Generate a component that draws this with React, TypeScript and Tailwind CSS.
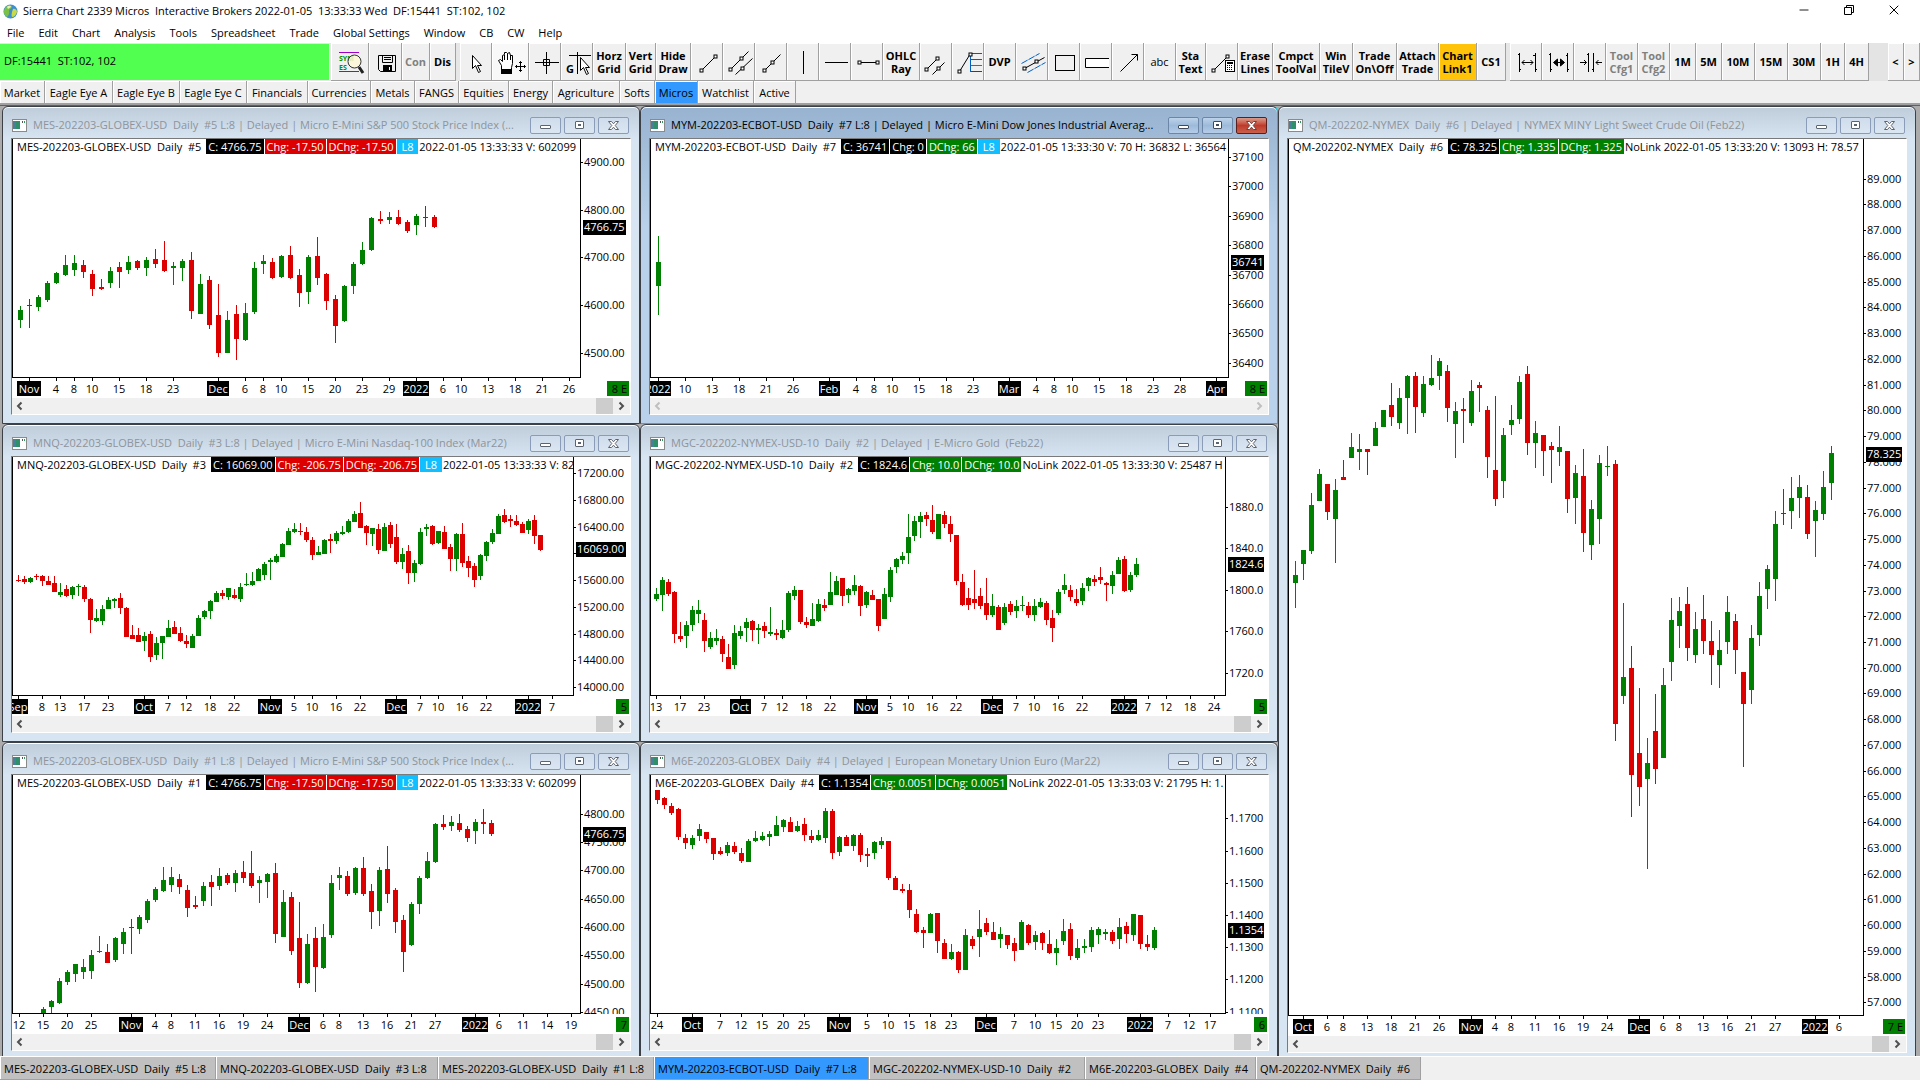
import React from "react";
import { Minus, X } from "lucide-react";
import clsx from "clsx";

const GREEN = "#008000";
const RED = "#dc0000";
const CYAN = "#0fbfff";
const BLACK = "#000000";

// price levels are stored in thirds of a pixel, measured from the chart's own origin
const UNITS = 3;

interface Tag {
  text: string;
  color: string;
}

interface ChartData {
  id: string;
  title: string;
  tab: string;
  label: string;
  tags: Tag[];
  info: string;
  active?: boolean;
  badge: string;
  axisWidth: number;
  firstX: number;
  step: number;
  origin: number;
  last: [string, number];
  prices: [string, number][];
  times: [string, number][];
  // direction (g / r) followed by high, body top, body bottom, low
  bars: string;
}

const mesTags: Tag[] = [
  { text: "C: 4766.75", color: BLACK },
  { text: "Chg: -17.50", color: RED },
  { text: "DChg: -17.50", color: RED },
  { text: " L8 ", color: CYAN },
];

const mes5: ChartData = {
  id: "mes5",
  title: "MES-202203-GLOBEX-USD  Daily  #5 L:8 | Delayed | Micro E-Mini S&P 500 Stock Price Index (...",
  tab: "MES-202203-GLOBEX-USD  Daily  #5 L:8",
  label: "MES-202203-GLOBEX-USD  Daily  #5",
  tags: mesTags,
  info: "2022-01-05 13:33:33 V: 602099",
  badge: "8 E",
  axisWidth: 49,
  firstX: 7,
  step: 9,
  origin: 27,
  last: ["4766.75", 290],
  prices: [["4900.00", 97], ["4800.00", 241], ["4700.00", 382], ["4600.00", 526], ["4500.00", 670]],
  times: [
    ["Nov", 1], ["4", 4], ["8", 6], ["10", 8], ["15", 11], ["18", 14], ["23", 17], ["Dec", 22], ["6", 25], ["8", 27],
    ["10", 29], ["15", 32], ["20", 35], ["23", 38], ["29", 41], ["2022", 44], ["6", 47], ["10", 49], ["13", 52],
    ["18", 55], ["21", 58], ["26", 61],
  ],
  bars: `g528,540,570,594 r507,525,528,594 g495,501,531,543 g453,459,510,516 g426,429,459,462 g375,405,435,438
    g375,399,420,438 r390,405,426,444 r420,432,477,498 r447,471,477,480 g411,423,459,474 r396,411,426,474
    g378,396,420,432 r390,393,414,420 g381,390,414,438 r357,387,402,414 r333,390,423,426 g396,408,414,465
    g387,393,414,453 r366,390,543,567 g432,462,552,552 r438,450,585,597 r462,555,669,681 g543,570,669,669
    r525,552,627,690 g519,549,630,633 g396,414,546,552 g375,393,402,432 r384,396,444,447 g375,378,441,444
    r348,375,444,447 r417,435,489,531 g375,381,486,522 r321,378,444,465 r429,432,513,540 r495,507,588,639
    g465,468,573,576 g396,402,468,492 g336,360,402,405 g261,264,360,363 r243,267,273,282 g246,261,270,282
    r240,261,282,285 r270,276,303,309 g252,258,285,315 r228,261,264,291 r255,261,291,294`,
};

const mnq: ChartData = {
  id: "mnq",
  title: "MNQ-202203-GLOBEX-USD  Daily  #3 L:8 | Delayed | Micro E-Mini Nasdaq-100 Index (Mar22)",
  tab: "MNQ-202203-GLOBEX-USD  Daily  #3 L:8",
  label: "MNQ-202203-GLOBEX-USD  Daily  #3",
  tags: [
    { text: "C: 16069.00", color: BLACK },
    { text: "Chg: -206.75", color: RED },
    { text: "DChg: -206.75", color: RED },
    { text: " L8 ", color: CYAN },
  ],
  info: "2022-01-05 13:33:33 V: 82",
  badge: "5",
  axisWidth: 56,
  firstX: 5,
  step: 6,
  origin: 81,
  last: ["16069.00", 358],
  prices: [
    ["17200.00", 130], ["16800.00", 211], ["16400.00", 290], ["16000.00", 370], ["15600.00", 451], ["15200.00", 532],
    ["14800.00", 613], ["14400.00", 691], ["14000.00", 772],
  ],
  times: [
    ["Sep", 0], ["8", 4], ["13", 7], ["17", 11], ["23", 15], ["Oct", 21], ["7", 25], ["12", 28], ["18", 32], ["22", 36],
    ["Nov", 42], ["5", 46], ["10", 49], ["16", 53], ["22", 57], ["Dec", 63], ["7", 67], ["10", 70], ["16", 74],
    ["22", 78], ["2022", 85], ["7", 89],
  ],
  bars: `r435,450,453,456 r438,447,456,462 g441,444,456,459 r432,438,441,450 r435,438,453,468 r438,453,465,465
    r438,459,486,486 g459,486,495,501 r465,477,498,501 g468,471,495,507 g462,468,471,498 r465,471,507,516
    r504,507,570,609 g537,564,573,576 g525,537,573,585 g501,510,537,537 g504,507,513,534 r489,504,534,552
    r531,534,621,621 r585,615,627,627 r594,615,636,636 g606,618,633,663 r603,612,681,696 g621,639,675,690
    g618,618,639,687 g570,594,621,621 r573,591,612,612 r591,609,633,636 r615,633,642,654 g612,618,654,654
    g555,564,618,618 g540,543,561,567 g510,513,543,567 g483,489,516,516 r480,489,498,507 g474,474,501,510
    r477,495,504,507 g459,471,507,516 g429,462,465,468 g426,453,465,468 g414,417,453,453 g396,402,435,450
    g384,390,396,450 g372,378,396,399 g339,342,381,381 g294,303,345,345 g279,297,306,309 r279,303,306,315
    r291,306,330,336 r321,330,375,390 g348,366,375,375 g327,330,372,372 r312,327,333,369 g303,309,333,342
    g288,306,312,315 g267,273,306,309 g243,252,276,276 r216,249,294,294 r285,288,309,345 g294,294,312,348
    r282,297,360,372 g279,291,363,363 r276,285,342,354 r282,321,396,402 g354,372,396,417 r345,363,429,462
    g390,399,429,456 g294,306,402,405 g282,291,297,318 r285,288,342,345 g303,303,339,342 r288,306,357,357
    r342,351,387,423 g309,312,387,423 r279,312,399,411 r378,393,414,441 r399,408,450,471 g372,375,438,450
    g333,336,378,393 g297,309,336,342 g252,258,312,312 r237,255,276,279 r255,267,273,291 r255,273,285,288
    r276,282,309,309 g267,273,300,312 r255,270,318,342 r315,315,360,363`,
};

const mes1: ChartData = {
  id: "mes1",
  title: "MES-202203-GLOBEX-USD  Daily  #1 L:8 | Delayed | Micro E-Mini S&P 500 Stock Price Index (...",
  tab: "MES-202203-GLOBEX-USD  Daily  #1 L:8",
  label: "MES-202203-GLOBEX-USD  Daily  #1",
  tags: mesTags,
  info: "2022-01-05 13:33:33 V: 602099",
  badge: "7",
  axisWidth: 49,
  firstX: 30,
  step: 8,
  origin: 105,
  last: ["4766.75", 281],
  prices: [
    ["4800.00", 223], ["4750.00", 307], ["4700.00", 391], ["4650.00", 478], ["4600.00", 562], ["4550.00", 646],
    ["4500.00", 733], ["4450.00", 817],
  ],
  times: [
    ["12", -3], ["15", 0], ["20", 3], ["25", 6], ["Nov", 11], ["4", 14], ["8", 16], ["11", 19], ["16", 22], ["19", 25],
    ["24", 28], ["Dec", 32], ["6", 35], ["8", 37], ["13", 40], ["16", 43], ["21", 46], ["27", 49], ["2022", 54],
    ["6", 57], ["11", 60], ["14", 63], ["19", 66],
  ],
  bars: `g801,807,819,819 g780,783,801,819 g714,723,789,792 g690,696,726,735 g672,672,702,726 g657,681,696,717
    g630,645,693,717 g588,633,636,639 r612,636,669,669 g591,594,660,666 g564,576,612,642 r537,561,564,642
    g525,531,567,582 g477,483,540,549 g441,447,480,486 g381,420,453,456 g381,411,435,456 r402,417,441,462
    r435,450,504,531 r468,495,501,507 g426,438,483,498 r405,426,441,498 g384,408,438,450 r399,405,429,435
    g390,399,429,456 r363,396,414,429 r333,399,438,444 g408,420,429,489 g399,402,426,474 r369,399,582,609
    g450,486,591,591 r456,471,633,645 r486,594,729,744 g582,612,729,732 r561,594,681,756 g552,591,684,687
    g405,429,585,594 g381,405,414,450 r393,408,462,468 g381,384,459,465 r351,384,462,468 r432,453,516,567
    g381,390,513,558 r318,387,462,489 r444,450,546,579 r525,540,636,696 g486,492,615,618 g408,414,492,522
    g336,363,414,417 g249,252,366,369 r225,252,261,270 g228,246,258,273 r222,249,270,276 r258,267,294,306
    g237,246,273,312 r207,246,252,282 r240,249,282,288`,
};

const mym: ChartData = {
  id: "mym",
  title: "MYM-202203-ECBOT-USD  Daily  #7 L:8 | Delayed | Micro E-Mini Dow Jones Industrial Averag...",
  tab: "MYM-202203-ECBOT-USD  Daily  #7 L:8",
  label: "MYM-202203-ECBOT-USD  Daily  #7",
  tags: [
    { text: "C: 36741", color: BLACK },
    { text: "Chg: 0", color: BLACK },
    { text: "DChg: 66", color: GREEN },
    { text: " L8 ", color: CYAN },
  ],
  info: "2022-01-05 13:33:30 V: 70 H: 36832 L: 36564",
  active: true,
  badge: "8 E",
  axisWidth: 39,
  firstX: 7,
  step: 9,
  origin: 88,
  last: ["36741", 458],
  prices: [
    ["37100", 143], ["37000", 230], ["36900", 320], ["36800", 407], ["36700", 497], ["36600", 584], ["36500", 671],
    ["36400", 761],
  ],
  times: [
    ["2022", 0], ["10", 3], ["13", 6], ["18", 9], ["21", 12], ["26", 15], ["Feb", 19], ["4", 22], ["8", 24], ["10", 26],
    ["15", 29], ["18", 32], ["23", 35], ["Mar", 39], ["4", 42], ["8", 44], ["10", 46], ["15", 49], ["18", 52],
    ["23", 55], ["28", 58], ["Apr", 62],
  ],
  bars: "g378,456,528,615",
};

const mgc: ChartData = {
  id: "mgc",
  title: "MGC-202202-NYMEX-USD-10  Daily  #2 | Delayed | E-Micro Gold  (Feb22)",
  tab: "MGC-202202-NYMEX-USD-10  Daily  #2",
  label: "MGC-202202-NYMEX-USD-10  Daily  #2",
  tags: [
    { text: "C: 1824.6", color: BLACK },
    { text: "Chg: 10.0", color: GREEN },
    { text: "DChg: 10.0", color: GREEN },
  ],
  info: "NoLink 2022-01-05 13:33:30 V: 25487 H",
  badge: "5",
  axisWidth: 42,
  firstX: 5,
  step: 6,
  origin: 96,
  last: ["1824.6", 418],
  prices: [["1880.0", 247], ["1840.0", 370], ["1800.0", 496], ["1760.0", 619], ["1720.0", 745]],
  times: [
    ["13", 0], ["17", 4], ["23", 8], ["Oct", 14], ["7", 18], ["12", 21], ["18", 25], ["22", 29], ["Nov", 35], ["5", 39],
    ["10", 42], ["16", 46], ["22", 50], ["Dec", 56], ["7", 60], ["10", 63], ["16", 67], ["22", 71], ["2022", 78],
    ["7", 82], ["12", 85], ["18", 89], ["24", 93],
  ],
  bars: `g489,507,522,528 g456,465,510,558 r462,471,507,513 r498,501,627,654 r591,633,642,651 g588,600,633,669
    g543,555,600,618 g525,555,567,594 r564,585,648,681 g621,639,666,672 g612,639,648,660 r633,642,687,711
    r657,696,732,732 g600,624,720,732 g603,618,633,642 g579,591,609,651 r585,588,615,648 g597,609,615,657
    r591,603,618,639 g546,621,627,633 r612,624,630,645 g585,615,639,642 g498,504,615,621 g483,495,513,525
    r495,495,591,597 r576,591,600,609 g534,582,603,603 g522,537,588,591 r522,540,549,558 g441,501,540,540
    g453,468,510,510 r459,459,513,543 g489,492,510,534 g450,480,498,510 r480,483,543,573 g498,501,540,549
    r495,510,525,525 r522,522,603,618 g489,507,582,582 g426,435,516,531 g399,402,426,444 g381,393,405,417
    g267,336,384,417 g273,288,333,348 g261,273,291,339 r261,270,282,303 r240,285,321,327 g267,267,342,342
    r258,270,297,309 r273,297,327,351 r330,330,468,480 r447,471,540,543 r489,519,540,555 r435,522,534,552
    r489,513,543,552 r459,534,570,585 g507,543,570,576 r540,546,615,615 g534,546,594,600 r528,537,561,570
    g525,543,558,579 g513,540,543,558 r531,543,570,579 g522,543,570,588 g519,531,546,549 r528,534,585,600
    r555,579,609,651 g492,501,564,570 g447,480,495,507 r480,495,516,528 r492,522,534,543 g474,489,528,540
    g456,459,483,498 r450,462,471,483 r426,456,465,477 r471,474,480,528 g438,450,483,507 g396,405,447,447
    r393,402,498,501 g441,450,495,501 g399,417,450,456`,
};

const m6e: ChartData = {
  id: "m6e",
  title: "M6E-202203-GLOBEX  Daily  #4 | Delayed | European Monetary Union Euro (Mar22)",
  tab: "M6E-202203-GLOBEX  Daily  #4",
  label: "M6E-202203-GLOBEX  Daily  #4",
  tags: [
    { text: "C: 1.1354", color: BLACK },
    { text: "Chg: 0.0051", color: GREEN },
    { text: "DChg: 0.0051", color: GREEN },
  ],
  info: "NoLink 2022-01-05 13:33:03 V: 21795 H: 1.",
  badge: "6",
  axisWidth: 42,
  firstX: 6,
  step: 7,
  origin: 105,
  last: ["1.1354", 571],
  prices: [
    ["1.1700", 235], ["1.1600", 334], ["1.1500", 430], ["1.1400", 526], ["1.1300", 622], ["1.1200", 718],
    ["1.1100", 817],
  ],
  times: [
    ["24", 0], ["Oct", 5], ["7", 9], ["12", 12], ["15", 15], ["20", 18], ["25", 21], ["Nov", 26], ["5", 30], ["10", 33],
    ["15", 36], ["18", 39], ["23", 42], ["Dec", 47], ["7", 51], ["10", 54], ["15", 57], ["20", 60], ["23", 63],
    ["2022", 69], ["7", 73], ["12", 76], ["17", 79],
  ],
  bars: `r150,150,180,192 r171,174,195,207 r189,198,219,225 r204,207,291,300 r282,294,309,327 g285,294,315,327
    g252,267,288,303 r276,276,297,309 r294,294,342,360 r321,333,342,345 g306,315,339,348 r306,318,336,342
    r324,339,363,369 g297,303,366,366 g273,294,303,306 g276,288,300,303 g273,282,291,318 g228,255,288,288
    g237,240,261,276 r231,246,276,276 g243,258,273,276 r234,252,285,303 r270,288,300,309 g270,285,300,303
    g204,213,294,309 r207,213,339,357 g288,291,336,348 r285,291,318,318 g282,285,318,333 r279,285,345,366
    r324,342,348,381 g303,306,339,357 g291,303,315,327 r303,303,414,420 r408,414,450,450 r432,447,453,459
    r432,450,510,534 r507,522,576,579 r561,570,579,624 g519,522,579,579 r519,519,603,639 r597,609,657,657
    g612,636,657,660 r633,636,690,699 g567,585,690,690 r588,597,618,627 g510,567,591,651 r534,549,576,585
    r546,576,600,600 g561,582,597,624 r585,585,615,627 r594,609,633,663 g540,546,630,630 r552,555,609,615
    g573,585,606,630 r576,579,609,630 r570,612,639,642 g597,624,639,675 g537,573,603,615 r549,567,648,660
    g597,624,654,660 g597,618,624,639 g561,570,621,636 g561,567,585,612 g567,576,582,600 r570,576,603,612
    g534,561,597,627 r546,558,582,609 g522,522,585,603 r525,525,612,627 r585,612,621,633 g561,570,624,630`,
};

const qm: ChartData = {
  id: "qm",
  title: "QM-202202-NYMEX  Daily  #6 | Delayed | NYMEX MINY Light Sweet Crude Oil (Feb22)",
  tab: "QM-202202-NYMEX  Daily  #6",
  label: "QM-202202-NYMEX  Daily  #6",
  tags: [
    { text: "C: 78.325", color: BLACK },
    { text: "Chg: 1.335", color: GREEN },
    { text: "DChg: 1.325", color: GREEN },
  ],
  info: "NoLink 2022-01-05 13:33:20 V: 13093 H: 78.57",
  badge: "7 E",
  axisWidth: 42,
  firstX: 6,
  step: 8,
  origin: -483,
  last: ["78.325", 461],
  prices: Array.from({ length: 33 }, (_, i): [string, number] => [`${89 - i}.000`, -364 + i * 77.22]),
  times: [
    ["Oct", 1], ["6", 4], ["8", 6], ["13", 9], ["18", 12], ["21", 15], ["26", 18], ["Nov", 22], ["4", 25], ["8", 27],
    ["11", 30], ["16", 33], ["19", 36], ["24", 39], ["Dec", 43], ["6", 46], ["8", 48], ["13", 51], ["16", 54],
    ["21", 57], ["27", 60], ["2022", 65], ["6", 68],
  ],
  bars: `g783,825,849,924 g750,750,792,840 g579,615,753,762 g507,522,603,603 r552,552,636,660 g537,570,657,789
    r480,531,540,540 g399,441,474,474 g402,447,456,510 r447,447,456,525 g366,384,438,438 g330,330,381,381
    r249,315,351,378 g264,294,369,387 g225,228,294,402 r216,228,321,399 g228,252,339,351 g165,234,255,258
    g174,183,228,270 r195,213,324,366 g306,333,372,474 r294,327,333,429 g240,273,369,378 r246,255,264,336
    r318,330,471,534 r288,510,597,618 g384,405,543,594 g315,360,375,405 g228,246,357,372 r198,222,429,465
    g363,399,429,504 r405,405,453,528 r426,438,450,549 g378,441,456,498 r453,453,597,639 g495,519,594,672
    r447,528,699,756 g600,627,735,780 g465,489,657,732 g438,498,501,528 r480,492,1272,1323 g909,1131,1188,1212
    r1038,1104,1425,1551 r1164,1359,1461,1518 g1314,1389,1437,1707 r1182,1293,1407,1452 g1104,1155,1374,1374
    g894,960,1086,1143 g891,933,978,1044 r861,912,1044,1083 g936,987,1065,1089 r885,957,1023,1062
    r963,1023,1065,1155 g990,1050,1095,1164 g888,936,1026,1062 r942,963,1050,1122 r1116,1116,1212,1401
    g975,1014,1170,1212 g846,888,1005,1038 g795,807,867,927 g633,672,837,903 r567,639,642,675 g531,594,633,687
    g525,561,594,654 r555,591,702,717 g603,630,663,771 g513,561,642,660 g438,459,549,600`,
};

const columns = [
  { className: "h-[calc(100%+4px)]", charts: [mes5, mnq, mes1] },
  { className: "h-[calc(100%+4px)]", charts: [mym, mgc, m6e] },
  { className: "h-[calc(100%+6px)]", charts: [qm] },
];

const monthWidth: Record<string, number> = {
  Nov: 24, Dec: 22, Oct: 21, Sep: 20, Feb: 21, Mar: 23, Apr: 21, "2022": 26,
};

const Candles = ({ chart }: { chart: ChartData }) => (
  <svg className="block h-full w-full" shapeRendering="crispEdges" aria-hidden="true">
    {chart.bars.trim().split(/\s+/).map((bar, i) => {
      const [high, top, bottom, low] = bar
        .slice(1)
        .split(",")
        .map((v) => Math.round((Number(v) - chart.origin) / UNITS));
      const x = chart.firstX + i * chart.step;
      return (
        <g key={i} fill={bar[0] === "g" ? GREEN : RED}>
          <rect x={x} y={high} width={1} height={Math.max(low - high, 1)} />
          <rect x={x - 2} y={top} width={5} height={Math.max(bottom - top, 1)} />
        </g>
      );
    })}
  </svg>
);

const PriceAxis = ({ chart }: { chart: ChartData }) => {
  const y = (v: number) => Math.round((v - chart.origin) / UNITS);
  const [lastText, lastValue] = chart.last;
  return (
    <div className="shrink-0 border-l border-black" style={{ width: chart.axisWidth + 1 }}>
      <svg className="block h-full w-full text-[11px]">
        {chart.prices.map(([text, value]) => (
          <g key={text}>
            <rect x={0} y={y(value)} width={2} height={1} />
            <text x={3} y={y(value) + 4}>{text}</text>
          </g>
        ))}
        <rect x={2} y={y(lastValue) - 7} width={chart.axisWidth - 6} height={15} />
        <text x={3} y={y(lastValue) + 4} fill="#fff">{lastText}</text>
      </svg>
    </div>
  );
};

const TimeAxis = ({ chart }: { chart: ChartData }) => (
  <div className="flex h-5 shrink-0">
    <svg className="block h-full min-w-0 flex-1 text-[11px]">
      {chart.times.map(([text, index]) => {
        const x = chart.firstX + 1 + index * chart.step;
        const boxed = monthWidth[text];
        return (
          <g key={index}>
            <rect x={x} y={0} width={1} height={3} />
            {boxed && <rect x={x - Math.floor(boxed / 2)} y={3} width={boxed} height={15} />}
            <text x={x} y={15} textAnchor="middle" fill={boxed ? "#fff" : "#000"}>{text}</text>
          </g>
        );
      })}
    </svg>
    <span className="mr-px mt-[3px] h-[15px] whitespace-pre bg-[#008000] px-[2px] text-[11px] leading-[15px]">
      {" " + chart.badge}
    </span>
  </div>
);

const Chevron = ({ flip, muted }: { flip?: boolean; muted?: boolean }) => (
  <svg width="17" height="16" viewBox="0 0 17 16" fill="none" stroke={muted ? "#bfbfbf" : "#505050"} strokeWidth="2">
    <path d={flip ? "M6.5 4.5L10 8L6.5 11.5" : "M9.5 4.5L6 8L9.5 11.5"} />
  </svg>
);

const ScrollBar = ({ muted }: { muted?: boolean }) => (
  <div className="flex h-4 shrink-0 bg-[#f0f0f0]">
    <button aria-label="Scroll left"><Chevron muted={muted} /></button>
    <div className="flex-1" />
    {!muted && <div className="w-[17px] bg-[#cdcdcd]" />}
    <button aria-label="Scroll right"><Chevron flip muted={muted} /></button>
  </div>
);

const FrameButton = ({ kind, active }: { kind: "min" | "max" | "close"; active?: boolean }) => {
  const red = active && kind === "close";
  const stroke = active ? "#3f4a5a" : "#5c6470";
  return (
    <button
      aria-label={kind}
      className={clsx(
        "flex h-[17px] w-[31px] items-center justify-center rounded-[2px] border",
        red && "border-[#5a1f1c] bg-linear-to-b from-[#d99a8c] via-[#c0392b] to-[#c9604c]",
        !red && active && "border-[#6c86a8] bg-linear-to-b from-[#bdd3ea] via-[#9cbada] to-[#b5cde8]",
        !active && "border-[#8b9cb8] bg-linear-to-b from-[#cfdceb] to-[#dbe6f3]",
      )}
    >
      <svg width="13" height="11" viewBox="0 0 13 11" fill="#fff" stroke={stroke}>
        {kind === "min" && <rect x="1.5" y="5.5" width="10" height="3" rx="0.5" />}
        {kind === "max" && (
          <>
            <rect x="2.5" y="1.5" width="8" height="7" rx="0.5" />
            <rect x="5.5" y="4.5" width="2" height="1" />
          </>
        )}
        {kind === "close" && (
          <path
            d="M1.5 1.5H4.5L6.5 3.8L8.5 1.5H11.5L8.2 5.5L11.5 9.5H8.5L6.5 7.2L4.5 9.5H1.5L4.8 5.5Z"
            stroke={red ? "#7d3b36" : stroke}
          />
        )}
      </svg>
    </button>
  );
};

const ChartIcon = () => (
  <svg width="15" height="13" viewBox="0 0 15 13" shapeRendering="crispEdges" className="shrink-0">
    <rect x="0" y="0" width="15" height="13" fill="#8a8a8a" />
    <rect x="1" y="1" width="13" height="11" fill="#fff" />
    <rect x="1" y="2" width="7" height="8" fill="#2f8f6a" />
    <rect x="1" y="2" width="3" height="8" fill="#4a7f9a" />
    <rect x="10" y="2" width="1" height="2" fill="#555" />
    <rect x="12" y="2" width="1" height="2" fill="#2a9d5b" />
  </svg>
);

const ChartWindow = ({ chart }: { chart: ChartData }) => (
  <section
    className={clsx(
      "flex min-h-0 flex-1 flex-col rounded-t-[6px] border border-[#3c4148] px-2 pb-2 shadow-[inset_0_1px_0_#fff]",
      chart.active
        ? "border-b-[#00c4dc] border-r-[#00c4dc] bg-linear-to-b from-[#98b3d0] to-[#b9d1ea] to-[120px]"
        : "bg-linear-to-b from-[#bfcddb] to-[#d7e4f2] to-[32px]",
    )}
  >
    <header className="flex h-[31px] shrink-0 items-center gap-1 pb-0.5 pl-px pr-0.5 pt-[7px]">
      <ChartIcon />
      <h2
        className={clsx(
          "min-w-0 flex-1 overflow-hidden whitespace-pre pl-[2px] text-[11px] leading-4",
          chart.active ? "text-black" : "text-[#8e949b]",
        )}
      >
        {chart.title}
      </h2>
      <div className="flex gap-[3px]">
        <FrameButton kind="min" active={chart.active} />
        <FrameButton kind="max" active={chart.active} />
        <FrameButton kind="close" active={chart.active} />
      </div>
    </header>
    <div className="flex min-h-0 flex-1 flex-col border border-b-white border-l-[#7a7a7a] border-r-white border-t-[#7a7a7a] bg-white">
      <div className="flex min-h-0 flex-1">
        <div className="relative min-w-0 flex-1 overflow-hidden border-b border-l border-black">
          <Candles chart={chart} />
          <div className="absolute inset-x-0 top-0 flex h-[15px] gap-px overflow-hidden whitespace-pre pl-1 text-[11px] leading-[15px]">
            <span className="pr-1">{chart.label}</span>
            {chart.tags.map((tag) => (
              <span key={tag.text} className="px-[2px] text-white" style={{ backgroundColor: tag.color }}>
                {tag.text}
              </span>
            ))}
            <span>{chart.info}</span>
          </div>
        </div>
        <PriceAxis chart={chart} />
      </div>
      <TimeAxis chart={chart} />
      <ScrollBar muted={chart.active} />
    </div>
  </section>
);

/* ---------- toolbar ---------- */

const Knot = ({ x, y }: { x: number; y: number }) => (
  <rect x={x - 1.5} y={y - 1.5} width={3} height={3} fill="#fff" />
);

const icons: Record<string, React.ReactNode> = {
  find: (
    <>
      <path d="M8 9.5H28M8 28.5H28" stroke="#a000c8" />
      <text x="8" y="18" fontSize="7" fontWeight="bold" fill="#009000" stroke="none">SYM</text>
      <text x="8" y="27" fontSize="7" fontWeight="bold" fill="#009000" stroke="none">ES</text>
      <circle cx="23.5" cy="18.5" r="6.5" fill="#fff8d8" fillOpacity="0.85" stroke="#333" />
      <path d="M28 24L32 30" strokeWidth="3" stroke="#222" />
    </>
  ),
  save: (
    <>
      <path d="M9.5 12.5H26.5V28.5H11.5L9.5 26.5Z" />
      <path d="M13.5 12.5V19.5H23.5V12.5M15 14.5H22M15 16.5H22" />
      <rect x="14.5" y="22.5" width="8" height="6" fill="#000" />
      <path d="M20.5 24V27" stroke="#fff" />
    </>
  ),
  pointer: <path d="M12.5 12.5V25.5L15.5 22.5L18.5 29.5L20.5 28.5L17.5 22.5H21.5Z" fill="#fff" />,
  hand: (
    <>
      <path
        d="M9.5 26.5L9.5 22.5L6.5 17.5L8.5 16.5L10.5 18.5V12.5L12.5 11.5V9.5L14.5 9.5L15.5 10.5L17.5 9.5L18.5 12.5L20.5 12.5V20.5L19.5 24.5V26.5Z"
        fill="#fff"
      />
      <path d="M12.5 12V17M15.5 10.5V17M18.5 12V17" />
      <rect x="9.5" y="26.5" width="10" height="4" fill="#000" />
      <path d="M23.5 23.5H33.5M28.5 18.5V28.5M27 20L28.5 18.5L30 20M27 27L28.5 28.5L30 27M25 22L23.5 23.5L25 25M32 22L33.5 23.5L32 25" />
    </>
  ),
  cross: <path d="M6 19.5H30M17.5 9V31M14.5 16.5H20.5V22.5H14.5Z" />,
  grab: (
    <>
      <path d="M8 12.5H30M16.5 9V31" />
      <text x="5" y="30" fontSize="11" fontWeight="bold" fill="#000" stroke="none">G</text>
      <path d="M19.5 14.5V27.5L22.5 24.5L25.5 31.5L27.5 30.5L24.5 24.5H28.5Z" fill="#fff" />
    </>
  ),
  line: <><path d="M10.5 27.5L24.5 13.5" /><Knot x={10.5} y={27.5} /><Knot x={24.5} y={13.5} /></>,
  channel: (
    <>
      <path d="M7.5 26.5L25.5 8.5M12.5 31.5L29.5 15.5" />
      <Knot x={7.5} y={26.5} /><Knot x={18.5} y={15.5} /><Knot x={19.5} y={25.5} />
    </>
  ),
  ray: <><path d="M9.5 27.5L25.5 11.5" /><Knot x={9.5} y={27.5} /><Knot x={17.5} y={19.5} /></>,
  vline: <path d="M16.5 8V31" />,
  hline: <path d="M6 19.5H29" />,
  segment: <><path d="M8.5 19.5H26.5" /><Knot x={8.5} y={19.5} /><Knot x={26.5} y={19.5} /></>,
  parallel: (
    <>
      <path d="M6.5 26.5L18.5 14.5M12.5 31.5L24.5 19.5" />
      <Knot x={6.5} y={26.5} /><Knot x={17.5} y={15.5} /><Knot x={18.5} y={25.5} />
    </>
  ),
  fib: (
    <>
      <path d="M7.5 28.5L18.5 10.5" />
      <path d="M19 10.5H30" stroke="#008000" />
      <path d="M18.5 12V29M19 16.5H30" stroke="#0060c0" />
      <path d="M19 22.5H30" stroke="#d04000" />
      <path d="M19 28.5H30" stroke="#9000b0" />
      <Knot x={7.5} y={28.5} /><Knot x={18.5} y={11.5} />
    </>
  ),
  regression: (
    <>
      <path d="M5.5 20.5L23.5 10.5M11.5 29.5L29.5 19.5" stroke="#0060c0" strokeDasharray="7 1" />
      <path d="M8.5 25.5L28.5 14.5" />
      <Knot x={8.5} y={25.5} /><Knot x={20.5} y={18.5} />
    </>
  ),
  rect: <rect x="7.5" y="12.5" width="19" height="15" />,
  rectExt: <path d="M29 15.5H5.5V24.5H29" fill="#fff" />,
  arrow: <path d="M8.5 28.5L25.5 11.5M19.5 11.5H25.5V17.5" />,
  calc: (
    <>
      <path d="M7.5 27.5L21.5 13.5" />
      <Knot x={7.5} y={27.5} /><Knot x={21.5} y={13.5} />
      <rect x="19.5" y="17.5" width="9" height="11" fill="#fff" />
      <rect x="21" y="19" width="6" height="2" fill="#000" stroke="none" />
      <path d="M21 22.5H27M21 24.5H27M21 26.5H27" strokeDasharray="1 1" />
    </>
  ),
  spaceOut: <path d="M9.5 10V29M8 11.5H10M9.5 26.5H11M25.5 10V29M23 12.5H25M25.5 26.5H27M12 19.5H23M14.5 17L12 19.5L14.5 22M20.5 17L23 19.5L20.5 22" />,
  spaceMid: (
    <>
      <path d="M8.5 10V29M7 11.5H9M8.5 26.5H10M25.5 10V29M24 12.5H26M25.5 26.5H27M12 19.5H22" />
      <path d="M11.5 19.5L15.5 16V23ZM22.5 19.5L18.5 16V23Z" fill="#000" />
    </>
  ),
  spaceIn: <path d="M14.5 10V29M13 11.5H15M19.5 10V29M18 26.5H20M6 19.5H12.5M10 17L12.5 19.5L10 22M28 19.5H22M24.5 17L22 19.5L24.5 22" />,
};

const iconNames: Record<string, string> = {
  find: "Find symbol", save: "Save", pointer: "Pointer", hand: "Move chart", cross: "Chart values", grab: "Grid pointer",
  line: "Line", channel: "Channel", ray: "Ray", vline: "Vertical line", hline: "Horizontal line", segment: "Horizontal segment",
  parallel: "Parallel lines", fib: "Retracement", regression: "Regression", rect: "Rectangle", rectExt: "Extending rectangle",
  arrow: "Arrow", calc: "Calculator", spaceOut: "Increase spacing", spaceMid: "Default spacing", spaceIn: "Decrease spacing",
};

const IconTool = ({ name, className = "w-8" }: { name: string; className?: string }) => (
  <button
    aria-label={iconNames[name]}
    className={clsx("shrink-0 border-b border-r border-[#a0a0a0] shadow-[inset_1px_1px_0_#fff]", className)}
  >
    <svg width="100%" height="37" fill="none" stroke="#000" strokeWidth="1">
      {icons[name]}
    </svg>
  </button>
);

const TextTool = ({ lines, className }: { lines: string[]; className: string }) => (
  <button
    className={clsx(
      "flex shrink-0 flex-col items-center justify-center border-b border-r border-[#a0a0a0] text-[11px] font-bold leading-[13px] shadow-[inset_1px_1px_0_#fff]",
      className,
    )}
  >
    {lines.map((line) => (
      <span key={line} className="whitespace-nowrap">{line}</span>
    ))}
  </button>
);

const Toolbar = () => (
  <div className="flex h-[38px] shrink-0 bg-[#e6e6e6] *:bg-[#f0f0f0]" role="toolbar" aria-label="Chart tools">
    <div className="my-px mr-[2px] flex w-[329px] shrink-0 items-center whitespace-pre bg-[#50ff50]! pb-px pl-1">
      DF:15441  ST:102, 102
    </div>
    <IconTool name="find" className="w-[38px]" />
    <IconTool name="save" className="w-[33px]" />
    <TextTool lines={["Con"]} className="w-[28px] text-[#808080]" />
    <TextTool lines={["Dis"]} className="mr-1 w-[26px]" />
    <IconTool name="pointer" />
    <IconTool name="hand" className="w-[37px] bg-[#f8f8f8]!" />
    <IconTool name="cross" />
    <IconTool name="grab" />
    <TextTool lines={["Horz", "Grid"]} className="w-[33px]" />
    <TextTool lines={["Vert", "Grid"]} className="w-[30px]" />
    <TextTool lines={["Hide", "Draw"]} className="w-[35px]" />
    <IconTool name="line" />
    <IconTool name="channel" />
    <IconTool name="ray" />
    <IconTool name="vline" />
    <IconTool name="hline" />
    <IconTool name="segment" />
    <TextTool lines={["OHLC", "Ray"]} className="w-[37px]" />
    <IconTool name="parallel" />
    <IconTool name="fib" />
    <TextTool lines={["DVP"]} className="w-[32px]" />
    <IconTool name="regression" />
    <IconTool name="rect" />
    <IconTool name="rectExt" />
    <IconTool name="arrow" />
    <TextTool lines={["abc"]} className="w-[32px] font-normal!" />
    <TextTool lines={["Sta", "Text"]} className="w-[30px]" />
    <IconTool name="calc" />
    <TextTool lines={["Erase", "Lines"]} className="w-[35px]" />
    <TextTool lines={["Cmpct", "ToolVal"]} className="w-[47px]" />
    <TextTool lines={["Win", "TileV"]} className="w-[33px]" />
    <TextTool lines={["Trade", "On\\Off"]} className="w-[44px]" />
    <TextTool lines={["Attach", "Trade"]} className="w-[42px]" />
    <TextTool lines={["Chart", "Link1"]} className="w-[38px] bg-[#ffc30a]!" />
    <TextTool lines={["CS1"]} className="mr-1 w-[29px]" />
    <IconTool name="spaceOut" />
    <IconTool name="spaceMid" />
    <IconTool name="spaceIn" />
    <TextTool lines={["Tool", "Cfg1"]} className="w-[32px] text-[#808080]" />
    <TextTool lines={["Tool", "Cfg2"]} className="w-[32px] text-[#808080]" />
    <TextTool lines={["1M"]} className="w-[26px]" />
    <TextTool lines={["5M"]} className="w-[26px]" />
    <TextTool lines={["10M"]} className="w-[33px]" />
    <TextTool lines={["15M"]} className="w-[33px]" />
    <TextTool lines={["30M"]} className="w-[33px]" />
    <TextTool lines={["1H"]} className="w-[24px]" />
    <TextTool lines={["4H"]} className="w-[24px]" />
    <div className="flex-1 bg-[#e4e4e4]!" />
    <TextTool lines={["<"]} className="w-4" />
    <TextTool lines={[">"]} className="w-4" />
  </div>
);

const menus = ["File", "Edit", "Chart", "Analysis", "Tools", "Spreadsheet", "Trade", "Global Settings", "Window", "CB", "CW", "Help"];

const books: [string, string][] = [
  ["Market", "w-[45px]"], ["Eagle Eye A", "w-[68px]"], ["Eagle Eye B", "w-[67px]"], ["Eagle Eye C", "w-[67px]"],
  ["Financials", "w-[61px]"], ["Currencies", "w-[63px]"], ["Metals", "w-[44px]"], ["FANGS", "w-[44px]"],
  ["Equities", "w-[50px]"], ["Energy", "w-[44px]"], ["Agriculture", "w-[67px]"], ["Softs", "w-[35px]"],
  ["Micros", "w-[43px]"], ["Watchlist", "w-[56px]"], ["Active", "w-[42px]"],
];

const bottomTabs: [ChartData, string][] = [
  [mes5, "w-[216px]"], [mnq, "w-[222px]"], [mes1, "w-[216px]"], [mym, "w-[215px]"], [mgc, "w-[216px]"],
  [m6e, "w-[171px]"], [qm, "w-[165px]"],
];

const Globe = () => (
  <svg width="15" height="15" viewBox="0 0 15 15" className="shrink-0">
    <circle cx="7.5" cy="7.5" r="7" fill="#3f8fd0" />
    <path d="M2 4C5 0 9 1 9 3C8 5 6 5 6 7C7 9 5 12 4 13C1 11 0 8 2 4Z" fill="#7cc142" />
    <path d="M10 5C13 4 14 7 14 8C13 11 11 13 9 13C8 11 9 9 9 8Z" fill="#c8d94a" />
    <path d="M4 3C6 1 8 2 8 3L5 5Z" fill="#e6f2b0" />
  </svg>
);

export default function App() {
  return (
    <div className="flex h-screen flex-col overflow-hidden bg-[#f0f0f0] font-['Open_Sans','Noto_Sans',sans-serif] text-[11px] text-black">
      <div className="flex h-[23px] shrink-0 items-center bg-white">
        <div className="flex items-center gap-[5px] pl-[3px]">
          <Globe />
          <h1 className="whitespace-pre">
            {"Sierra Chart 2339 Micros  Interactive Brokers 2022-01-05  13:33:33 Wed  DF:15441  ST:102, 102"}
          </h1>
        </div>
        <div className="ml-auto flex h-full items-start pr-[3px]">
          <button aria-label="Minimize" className="flex h-5 w-[45px] items-center justify-center">
            <Minus size={14} strokeWidth={1.5} />
          </button>
          <button aria-label="Restore" className="flex h-5 w-[45px] items-center justify-center">
            <svg width="10" height="10" viewBox="0 0 10 10" fill="none" stroke="#000">
              <path d="M0.5 2.5H7.5V9.5H0.5ZM2.5 2.5V0.5H9.5V7.5H7.5" />
            </svg>
          </button>
          <button aria-label="Close" className="flex h-5 w-[46px] items-center justify-center">
            <X size={16} strokeWidth={1.5} />
          </button>
        </div>
      </div>
      <nav className="flex h-5 shrink-0 items-center gap-[14px] bg-white pl-[7px]">
        {menus.map((menu) => (
          <button key={menu} className="whitespace-nowrap">{menu}</button>
        ))}
      </nav>
      <Toolbar />
      <div className="flex h-[24px] shrink-0 border-b-2 border-[#a0a0a0]" role="tablist">
        {books.map(([name, width]) => (
          <button
            key={name}
            role="tab"
            aria-selected={name === "Micros"}
            className={clsx(
              "shrink-0 whitespace-nowrap border-r border-[#a0a0a0] pt-0.5 text-center shadow-[inset_1px_1px_0_#fff]",
              name === "Micros" && "bg-[#3399ff]",
              width,
            )}
          >
            {name}
          </button>
        ))}
      </div>
      <main className="flex min-h-0 flex-1 overflow-hidden border-t border-[#606060] bg-[#ababab] pl-[2px] pr-1">
        {columns.map((column) => (
          <div key={column.charts[0].id} className={clsx("flex min-w-0 flex-1 flex-col", column.className)}>
            {column.charts.map((chart) => (
              <ChartWindow key={chart.id} chart={chart} />
            ))}
          </div>
        ))}
      </main>
      <footer className="flex h-6 shrink-0 border-t border-white">
        {bottomTabs.map(([chart, width]) => (
          <button
            key={chart.id}
            className={clsx(
              "shrink-0 whitespace-pre border-b border-r border-[#a0a0a0] pl-1 pt-0.5 text-left shadow-[inset_1px_0_0_#fff]",
              chart.active ? "bg-[#3399ff]" : "bg-[#c0c0c0]",
              width,
            )}
          >
            {chart.tab}
          </button>
        ))}
      </footer>
    </div>
  );
}
